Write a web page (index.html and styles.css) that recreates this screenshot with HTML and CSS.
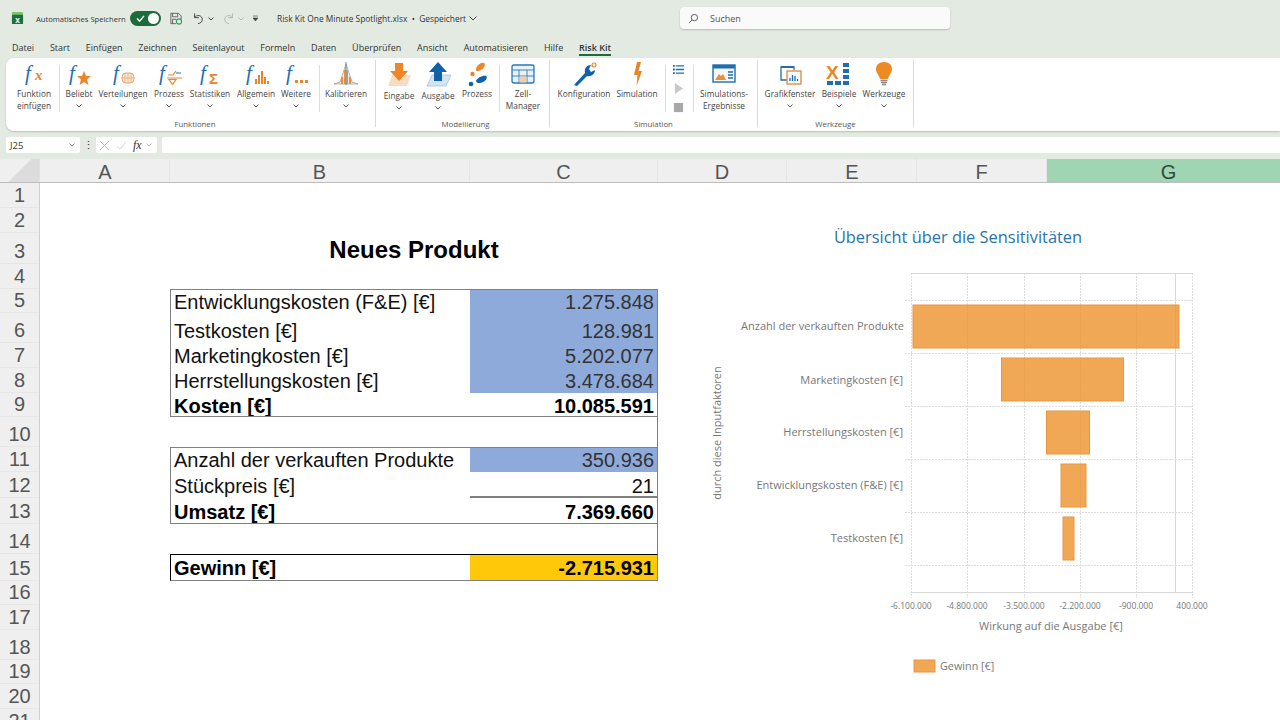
FILE: index.html
```html
<!DOCTYPE html>
<html lang="de">
<head>
  <meta charset="UTF-8" />
  <meta name="viewport" content="width=device-width, initial-scale=1.0" />
  <title>Risk Kit One Minute Spotlight</title>
  <link rel="stylesheet" href="styles.css">
</head>
<body>

<!-- Title bar -->
<header class="titlebar">
  <svg class="app-icon" viewBox="0 0 14 14">
    <rect x="1" y="0" width="12" height="7" rx="1" fill="#7cc36a"/>
    <rect x="1" y="3" width="12" height="10" rx="1" fill="#1d6f42"/>
    <text x="7" y="11.5" class="app-x">x</text>
  </svg>
  <span class="autosave">Automatisches Speichern</span>
  <div class="toggle">
    <svg viewBox="0 0 10 8" class="toggle-check"><path d="M1 4l3 3 5-6" fill="none" stroke="#fff" stroke-width="1.6"/></svg>
    <span class="toggle-knob"></span>
  </div>
  <svg class="qa save" viewBox="0 0 14 14">
    <path d="M1 1h9l3 3v4M1 1v12h6M3 1v4h6V1M3 13V8h4" fill="none" stroke="#555" stroke-width="1"/>
    <circle cx="10.5" cy="10.5" r="3" fill="none" stroke="#2f9e5b" stroke-width="1.3"/>
  </svg>
  <svg class="qa undo" viewBox="0 0 14 14"><path d="M3 1v5h5M3 6c2-4 9-3 9 2 0 3-2 4.500-5 5" fill="none" stroke="#444" stroke-width="1.1"/></svg>
  <svg class="chev chev-undo" viewBox="0 0 6 4"><path d="M.5 .5L3 3 5.500 .5" fill="none" stroke="#444"/></svg>
  <svg class="qa redo" viewBox="0 0 14 14"><path d="M11 1v5H6M11 6C9 2 2 3 2 8c0 3 2 4.500 5 5" fill="none" stroke="#b5b9b5" stroke-width="1.1"/></svg>
  <svg class="chev chev-redo" viewBox="0 0 6 4"><path d="M.5 .5L3 3 5.500 .5" fill="none" stroke="#b5b9b5"/></svg>
  <svg class="chev chev-custom" viewBox="0 0 7 7"><path d="M1 1h5M1 3h5L3.500 6z" fill="#444" stroke="#444" stroke-width=".6"/></svg>
  <span class="filename">Risk Kit One Minute Spotlight.xlsx &nbsp;•&nbsp; Gespeichert</span>
  <svg class="chev chev-file" viewBox="0 0 8 5"><path d="M.5 .5L4 4 7.500 .5" fill="none" stroke="#444"/></svg>
  <div class="search">
    <svg viewBox="0 0 12 12" class="search-icon"><circle cx="7" cy="5" r="3.500" fill="none" stroke="#555"/><path d="M4.500 7.500L1 11" stroke="#555"/></svg>
    <span>Suchen</span>
  </div>
</header>

<!-- Tabs -->
<nav class="tabs">
  <span>Datei</span>
  <span>Start</span>
  <span>Einfügen</span>
  <span>Zeichnen</span>
  <span>Seitenlayout</span>
  <span>Formeln</span>
  <span>Daten</span>
  <span>Überprüfen</span>
  <span>Ansicht</span>
  <span>Automatisieren</span>
  <span>Hilfe</span>
  <span class="tab-active">Risk Kit</span>
</nav>

<!-- Ribbon -->
<section class="ribbon">
  <div class="group group-funktionen">
    <div class="tools">
      <div class="tool">
        <svg class="ico" viewBox="0 0 28 26"><text x="5" y="19" class="fn">f</text><text x="15" y="19" class="fn-x">x</text></svg>
        <p>Funktion<br>einfügen</p>
      </div>
      <i class="sep"></i>
      <div class="tool">
        <svg class="ico" viewBox="0 0 28 26"><text x="4" y="19" class="fn">f</text><polygon points="19,10 21,15 26,15 22,18.500 23.500,24 19,21 14.500,24 16,18.500 12,15 17,15" fill="#e8842a"/></svg>
        <p>Beliebt</p>
        <svg class="chev-down" viewBox="0 0 6 4"><path d="M.5 .5L3 3 5.500 .5" fill="none" stroke="#555"/></svg>
      </div>
      <div class="tool">
        <svg class="ico" viewBox="0 0 28 26"><text x="4" y="19" class="fn">f</text><rect x="13" y="12" width="12" height="10" rx="4" fill="#fbeadb" stroke="#e3a56c"/><path d="M19 12v10M13 17h12M16 12v10M22 12v10" stroke="#e3a56c" stroke-width=".7"/></svg>
        <p>Verteilungen</p>
        <svg class="chev-down" viewBox="0 0 6 4"><path d="M.5 .5L3 3 5.500 .5" fill="none" stroke="#555"/></svg>
      </div>
      <div class="tool">
        <svg class="ico" viewBox="0 0 28 26"><text x="4" y="19" class="fn">f</text><path d="M13 14h5l3-4M12 17h15" fill="none" stroke="#e8842a" stroke-width="1.200"/><path d="M14 18.500h7l-3.500 5z" fill="none" stroke="#e8842a" stroke-width="1.200"/><path d="M21 12h5" stroke="#1f6fb0"/></svg>
        <p>Prozess</p>
        <svg class="chev-down" viewBox="0 0 6 4"><path d="M.5 .5L3 3 5.500 .5" fill="none" stroke="#555"/></svg>
      </div>
      <div class="tool">
        <svg class="ico" viewBox="0 0 28 26"><text x="4" y="19" class="fn">f</text><text x="13" y="23" class="fn-sum">Σ</text></svg>
        <p>Statistiken</p>
        <svg class="chev-down" viewBox="0 0 6 4"><path d="M.5 .5L3 3 5.500 .5" fill="none" stroke="#555"/></svg>
      </div>
      <div class="tool">
        <svg class="ico" viewBox="0 0 28 26"><text x="4" y="19" class="fn">f</text><path d="M13 18h2v5h-2zM16 14h2v9h-2zM19 10h2v13h-2zM22 16h2v7h-2zM25 20h2v3h-2z" fill="#e8842a"/></svg>
        <p>Allgemein</p>
        <svg class="chev-down" viewBox="0 0 6 4"><path d="M.5 .5L3 3 5.500 .5" fill="none" stroke="#555"/></svg>
      </div>
      <div class="tool">
        <svg class="ico" viewBox="0 0 28 26"><text x="4" y="19" class="fn">f</text><path d="M13 19h3v3h-3zM18 19h3v3h-3zM23 19h3v3h-3z" fill="#e8842a"/></svg>
        <p>Weitere</p>
        <svg class="chev-down" viewBox="0 0 6 4"><path d="M.5 .5L3 3 5.500 .5" fill="none" stroke="#555"/></svg>
      </div>
      <i class="sep"></i>
      <div class="tool">
        <svg class="ico" viewBox="0 0 28 26"><path d="M2 23h24L20 21 16 9 14 3 12 9 8 21z" fill="#f6e8da" stroke="#9a9a9a" stroke-width=".7"/><path d="M9 16h2v7H9zM12 9h1.500v14H12zM14.500 9H16v14h-1.500zM17 16h2v7h-2z" fill="#e8913a"/><path d="M14 1v23" stroke="#1f6fb0" stroke-width=".8"/></svg>
        <p>Kalibrieren</p>
        <svg class="chev-down" viewBox="0 0 6 4"><path d="M.5 .5L3 3 5.500 .5" fill="none" stroke="#555"/></svg>
      </div>
    </div>
    <div class="group-label">Funktionen</div>
  </div>

  <div class="group group-modell">
    <div class="tools">
      <div class="tool tool-low">
        <svg class="ico" viewBox="0 0 28 26"><polygon points="7,14 26,14 22,25 3,25" fill="#f7dcc4"/><polygon points="10,2 18,2 18,10 23,10 14,20 5,10 10,10" fill="#ed8623"/></svg>
        <p>Eingabe</p>
        <svg class="chev-down" viewBox="0 0 6 4"><path d="M.5 .5L3 3 5.500 .5" fill="none" stroke="#555"/></svg>
      </div>
      <div class="tool tool-low">
        <svg class="ico" viewBox="0 0 28 26"><polygon points="8,14 27,14 22,25 3,25" fill="#d4e4f2" stroke="#9dbcd8" stroke-width=".7"/><polygon points="14,1 23,11 18,11 18,20 10,20 10,11 5,11" fill="#0f62a8"/></svg>
        <p>Ausgabe</p>
        <svg class="chev-down" viewBox="0 0 6 4"><path d="M.5 .5L3 3 5.500 .5" fill="none" stroke="#555"/></svg>
      </div>
      <div class="tool">
        <svg class="ico" viewBox="0 0 28 26"><path d="M13 9c0-4 5-8 8-7 2 1 0 6-3 7-2 1-5 2-5 0z" fill="#ed8623"/><circle cx="9.500" cy="13" r="2.200" fill="#ed8623"/><path d="M13 20c1-3 7-6 10-5 2 1 0 5-3 6-3 2-7 1-7-1z" fill="#0f62a8"/><circle cx="8" cy="23" r="2.300" fill="#0f62a8"/></svg>
        <p>Prozess</p>
      </div>
      <i class="sep"></i>
      <div class="tool">
        <svg class="ico" viewBox="0 0 28 26"><rect x="3" y="4" width="22" height="18" rx="2" fill="#e9f1f8" stroke="#2a78b8" stroke-width="1.300"/><path d="M3 9h22M3 15h22M10 9v13M18 9v13" stroke="#2a78b8" stroke-width=".9"/><rect x="10.500" y="15.500" width="7" height="6" fill="#f3cfa8"/></svg>
        <p>Zell-<br>Manager</p>
      </div>
    </div>
    <div class="group-label">Modellierung</div>
  </div>

  <div class="group group-sim">
    <div class="tools">
      <div class="tool">
        <svg class="ico" viewBox="0 0 28 26"><path d="M4 24l11-12c-1-5 2-8 6-8l-2 4 2 3 4-2c0 4-4 7-8 6L7 25z" fill="#0f62a8"/><circle cx="24" cy="4" r="2" fill="none" stroke="#e8842a" stroke-width="1.200"/></svg>
        <p>Konfiguration</p>
      </div>
      <div class="tool">
        <svg class="ico" viewBox="0 0 28 26"><polygon points="14,1 18,1 15.500,10 19,10 13.500,25 14.500,14 11,14" fill="#e8842a"/></svg>
        <p>Simulation</p>
      </div>
      <i class="sep"></i>
      <div class="mini-tools">
        <svg viewBox="0 0 12 12" class="mini"><path d="M0 1h2v2H0zM0 5h2v2H0zM0 9h2v2H0z" fill="#1f6fb0"/><path d="M3 2h9M3 6h9M3 10h9" stroke="#1f6fb0" stroke-width="1.400"/></svg>
        <svg viewBox="0 0 12 12" class="mini"><polygon points="2,0 11,6 2,12" fill="#c9c9c9"/></svg>
        <svg viewBox="0 0 12 12" class="mini"><rect x="1" y="1" width="10" height="10" fill="#a8a8a8"/></svg>
      </div>
      <i class="sep"></i>
      <div class="tool">
        <svg class="ico" viewBox="0 0 28 26"><rect x="3" y="4" width="22" height="17" fill="#f4f8fb" stroke="#1f6fb0" stroke-width="1.400"/><rect x="3" y="4" width="22" height="3.500" fill="#1f6fb0"/><path d="M5 19l4-6 2 2 2-2 3 6z" fill="#e8913a"/><path d="M18 11h5M18 14h5M18 17h5" stroke="#1f6fb0" stroke-width="1.300"/></svg>
        <p>Simulations-<br>Ergebnisse</p>
      </div>
    </div>
    <div class="group-label">Simulation</div>
  </div>

  <div class="group group-werk">
    <div class="tools">
      <div class="tool">
        <svg class="ico" viewBox="0 0 28 26"><path d="M12 19H5V6h13v3" fill="none" stroke="#1f6fb0" stroke-width="1.300"/><path d="M5 6h13" stroke="#1f6fb0" stroke-width="2"/><rect x="11" y="10" width="14" height="13" fill="#f7fafc" stroke="#d98a3e" stroke-width="1.300"/><path d="M14 20v-3M16.500 20v-6M19 20v-5M21.500 20v-2" stroke="#1f6fb0" stroke-width="1.300"/></svg>
        <p>Grafikfenster</p>
        <svg class="chev-down" viewBox="0 0 6 4"><path d="M.5 .5L3 3 5.500 .5" fill="none" stroke="#555"/></svg>
      </div>
      <div class="tool">
        <svg class="ico" viewBox="0 0 28 26"><text x="1" y="18" class="x-mark">X</text><path d="M18 2h6v4h-6zM18 8h6v4h-6zM18 14h6v4h-6zM2 20h6v4H2zM10 20h6v4h-6zM18 20h6v4h-6z" fill="#1f6fb0"/></svg>
        <p>Beispiele</p>
        <svg class="chev-down" viewBox="0 0 6 4"><path d="M.5 .5L3 3 5.500 .5" fill="none" stroke="#555"/></svg>
      </div>
      <div class="tool">
        <svg class="ico" viewBox="0 0 28 26"><path d="M14 1c5 0 8 3 8 7 0 4-3 6-4 10h-8C9 14 6 12 6 8c0-4 3-7 8-7z" fill="#ee8a23"/><path d="M10.500 19.500h7M11 21.500h6M12 23.500h4" stroke="#8d8d8d" stroke-width="1.300"/></svg>
        <p>Werkzeuge</p>
        <svg class="chev-down" viewBox="0 0 6 4"><path d="M.5 .5L3 3 5.500 .5" fill="none" stroke="#555"/></svg>
      </div>
    </div>
    <div class="group-label">Werkzeuge</div>
  </div>
</section>

<!-- Formula bar -->
<div class="formula-bar">
  <div class="name-box">
    <span>J25</span>
    <svg class="chev" viewBox="0 0 8 5"><path d="M.5 .5L4 4 7.500 .5" fill="none" stroke="#555"/></svg>
  </div>
  <div class="fx-dots">⋮</div>
  <div class="fx-box">
    <svg viewBox="0 0 10 10" class="fx-ico"><path d="M0 0l10 10M10 0L0 10" stroke="#b5b5b5"/></svg>
    <svg viewBox="0 0 12 10" class="fx-ico"><path d="M0 6l4 4 8-10" fill="none" stroke="#c5c5c5"/></svg>
    <span class="fx-label">fx</span>
    <svg class="chev" viewBox="0 0 8 5"><path d="M.5 .5L4 4 7.500 .5" fill="none" stroke="#999"/></svg>
  </div>
  <div class="formula-input"></div>
</div>

<!-- Column headers -->
<div class="col-headers">
  <div class="corner"></div>
  <div class="col col-a">A</div>
  <div class="col col-b">B</div>
  <div class="col col-c">C</div>
  <div class="col col-d">D</div>
  <div class="col col-e">E</div>
  <div class="col col-f">F</div>
  <div class="col col-g">G</div>
</div>

<main class="sheet">
  <div class="row-headers">
    <div class="h25">1</div>
    <div class="h25">2</div>
    <div class="h31">3</div>
    <div class="h25">4</div>
    <div class="h24">5</div>
    <div class="h30">6</div>
    <div class="h25">7</div>
    <div class="h25">8</div>
    <div class="h24">9</div>
    <div class="h30">10</div>
    <div class="h25">11</div>
    <div class="h26">12</div>
    <div class="h26">13</div>
    <div class="h30">14</div>
    <div class="h27">15</div>
    <div class="h24">16</div>
    <div class="h25">17</div>
    <div class="h30">18</div>
    <div class="h24">19</div>
    <div class="h25">20</div>
    <div class="h25">21</div>
  </div>

  <div class="cells">
    <div class="calc">
      <div class="h25"></div>
      <div class="h25"></div>
      <h1 class="h31 calc-title">Neues Produkt</h1>
      <div class="h25"></div>

      <div class="box">
        <div class="row h24"><span>Entwicklungskosten (F&amp;E) [€]</span><span class="val input">1.275.848</span></div>
        <div class="row h30"><span>Testkosten [€]</span><span class="val input">128.981</span></div>
        <div class="row h25"><span>Marketingkosten [€]</span><span class="val input">5.202.077</span></div>
        <div class="row h25"><span>Herrstellungskosten [€]</span><span class="val input">3.478.684</span></div>
        <div class="row h24 bold"><span>Kosten [€]</span><span class="val">10.085.591</span></div>
      </div>
      <div class="spacer h30"></div>

      <div class="box">
        <div class="row h25"><span>Anzahl der verkauften Produkte</span><span class="val input">350.936</span></div>
        <div class="row h26"><span>Stückpreis [€]</span><span class="val underlined">21</span></div>
        <div class="row h26 bold"><span>Umsatz [€]</span><span class="val">7.369.660</span></div>
      </div>
      <div class="spacer h30"></div>

      <div class="box box-result">
        <div class="row h27 bold"><span>Gewinn [€]</span><span class="val result">-2.715.931</span></div>
      </div>
    </div>

    <!-- Sensitivity chart, drawn in page coordinates -->
    <svg class="chart" viewBox="700 220 560 480">
      <text x="958" y="243" class="chart-title">Übersicht über die Sensitivitäten</text>

      <g class="grid-v">
        <path d="M911.500 273v325M967.500 273v325M1024.500 273v325M1080.500 273v325M1136.500 273v325M1192.500 273v325"/>
      </g>
      <path d="M1175.500 273v319" class="grid-strong"/>
      <g class="grid-h">
        <path d="M905 300.500h288M905 353.500h288M905 406.500h288M905 459.500h288M905 512.500h288M905 565.500h288"/>
      </g>
      <path d="M911 273.500h282M911 592.500h282" class="grid-strong"/>

      <rect x="913" y="305" width="266" height="43" class="bar"/>
      <rect x="1001.500" y="358" width="122" height="43" class="bar"/>
      <rect x="1046.500" y="411" width="43" height="43" class="bar"/>
      <rect x="1061" y="464" width="25" height="43" class="bar"/>
      <rect x="1063" y="517" width="11" height="43" class="bar"/>

      <g class="cat-labels">
        <text x="904" y="330">Anzahl der verkauften Produkte</text>
        <text x="903" y="384">Marketingkosten [€]</text>
        <text x="903" y="436">Herrstellungskosten [€]</text>
        <text x="903" y="489">Entwicklungskosten (F&amp;E) [€]</text>
        <text x="903" y="542">Testkosten [€]</text>
      </g>

      <g class="val-labels">
        <text x="911" y="609">-6.100.000</text>
        <text x="967" y="609">-4.800.000</text>
        <text x="1024" y="609">-3.500.000</text>
        <text x="1080" y="609">-2.200.000</text>
        <text x="1136" y="609">-900.000</text>
        <text x="1192" y="609">400.000</text>
      </g>

      <text x="1051" y="630" class="axis-title">Wirkung auf die Ausgabe [€]</text>
      <text transform="translate(721 433) rotate(-90)" class="axis-title">durch diese Inputfaktoren</text>

      <rect x="914" y="660" width="21" height="12" class="bar"/>
      <text x="940" y="670" class="legend">Gewinn [€]</text>
    </svg>
  </div>
</main>

</body>
</html>
```

FILE: styles.css
```css
* {
  box-sizing: border-box;
}

body {
  font-family: 'Open Sans', sans-serif;
  background-color: #e3eae1;
  color: #333;
  margin: 0;
  height: 720px;
  overflow: hidden;
}

/* Title bar */
.titlebar {
  display: flex;
  align-items: center;
  height: 37px;
  padding-left: 11px;
  font-size: 9px;
}

.app-icon {
  width: 13px;
  height: 13px;
}

.app-x {
  font: bold 9px 'Liberation Sans', sans-serif;
  fill: #fff;
  text-anchor: middle;
}

.autosave {
  margin-left: 12px;
  width: 94px;
  white-space: nowrap;
  font-size: 7.600px;
}

.toggle {
  position: relative;
  width: 31px;
  height: 15px;
  border-radius: 8px;
  background-color: #1c6b3b;
}

.toggle-check {
  position: absolute;
  left: 6px;
  top: 4px;
  width: 9px;
  height: 7px;
}

.toggle-knob {
  position: absolute;
  right: 2px;
  top: 2px;
  width: 11px;
  height: 11px;
  border-radius: 50%;
  background: #fff;
}

.qa {
  width: 12px;
  height: 13px;
}

.save { margin-left: 9px; }
.undo { margin-left: 10px; }
.redo { margin-left: 9px; }

.chev {
  width: 6px;
  height: 4px;
  flex: none;
}

.chev-undo { margin-left: 4px; }
.chev-redo { margin-left: 3px; }
.chev-custom { margin-left: 8px; width: 7px; height: 7px; }
.chev-file { margin-left: 3px; width: 8px; height: 5px; }

.filename {
  margin-left: 18px;
  white-space: nowrap;
  font-size: 8.400px;
}

.search {
  display: flex;
  align-items: center;
  position: absolute;
  left: 680px;
  top: 7px;
  width: 270px;
  height: 22px;
  padding-left: 8px;
  background: #f9faf9;
  border-radius: 4px;
  box-shadow: 0 1px 2px rgba(0, 0, 0, 0.2);
  font-size: 9px;
  color: #555;
}

.search-icon {
  width: 11px;
  height: 11px;
  margin-right: 11px;
}

/* Tabs */
.tabs {
  display: flex;
  gap: 15.800px;
  height: 21px;
  padding-left: 12px;
  font-size: 9px;
  line-height: 21px;
}

.tab-active {
  position: relative;
  font-weight: 600;
}

.tab-active::after {
  content: "";
  position: absolute;
  left: 0;
  right: 0;
  bottom: 2px;
  height: 2px;
  background: #1c6b3b;
}

/* Ribbon */
.ribbon {
  display: flex;
  height: 73px;
  margin-left: 6px;
  background: #fff;
  border-radius: 8px 0 0 8px;
  box-shadow: 0 1px 2px rgba(0, 0, 0, 0.18);
}

.group {
  display: flex;
  flex-direction: column;
  margin: 2px 0 4px;
  border-right: 1px solid #d9d9d9;
}

.group-funktionen { width: 370px; padding-left: 9px; }
.group-modell { width: 174px; padding-left: 6px; }
.group-sim { width: 208px; }
.group-werk { width: 156px; }

.tools {
  display: grid;
  height: 56px;
}

.group-funktionen .tools { grid-template-columns: 38px 7px 38px 50px 42px 40px 52px 28px 10px 52px; }
.group-modell .tools { grid-template-columns: 34px 44px 34px 6px 46px; }
.group-sim .tools { grid-template-columns: 68px 38px 10px 24px 4px 60px; }
.group-werk .tools { grid-template-columns: 64px 34px 56px; }

.tool {
  display: flex;
  flex-direction: column;
  align-items: center;
  min-width: 0;
  font-size: 8.300px;
  line-height: 12px;
  color: #444;
}

.tool p {
  margin: 1px 0 0;
  text-align: center;
  white-space: nowrap;
}

.tool-low p {
  margin-top: 3px;
}

.ico {
  flex: none;
  width: 28px;
  height: 26px;
  margin-top: 1px;
}

.chev-down {
  width: 6px;
  height: 4px;
  margin-top: 4px;
}

.fn {
  font: italic 21px 'Liberation Serif', serif;
  fill: #1f6fb0;
}

.fn-x {
  font: italic bold 15px 'Liberation Serif', serif;
  fill: #e8842a;
}

.fn-sum {
  font: bold 15px 'Liberation Sans', sans-serif;
  fill: #e8842a;
}

.x-mark {
  font: bold 19px 'Liberation Sans', sans-serif;
  fill: #ed8623;
}

.sep {
  justify-self: end;
  width: 1px;
  height: 47px;
  margin-top: 5px;
  background: #dcdcdc;
}

.mini-tools {
  display: flex;
  flex-direction: column;
  align-items: center;
  gap: 8px;
  padding-top: 4px;
}

.mini {
  width: 11px;
  height: 11px;
}

.group-label {
  margin-top: auto;
  margin-bottom: -3px;
  text-align: center;
  font-size: 7.800px;
  line-height: 11px;
  color: #555;
}

/* Formula bar */
.formula-bar {
  display: flex;
  height: 16px;
  margin: 6px 0;
  padding-left: 6px;
  font-size: 9.500px;
}

.name-box {
  display: flex;
  align-items: center;
  justify-content: space-between;
  width: 74px;
  padding: 0 5px 0 4px;
  background: #fff;
  border-radius: 2px;
}

.fx-dots {
  width: 16px;
  text-align: center;
  line-height: 16px;
  font-size: 11px;
}

.fx-box {
  display: flex;
  align-items: center;
  gap: 8px;
  width: 61px;
  padding-left: 4px;
  background: #fff;
  border-radius: 2px;
}

.fx-ico {
  width: 9px;
  height: 9px;
}

.fx-label {
  margin-left: -1px;
  margin-right: -4px;
  font: italic 12px 'Liberation Serif', serif;
}

.formula-input {
  flex: 1;
  margin-left: 5px;
  background: #fff;
  border-radius: 2px 0 0 2px;
}

/* Sheet headers */
.col-headers {
  display: flex;
  height: 24px;
  background: #efefef;
  border-bottom: 1px solid #bdbdbd;
  font: 20px/26px 'Liberation Sans', sans-serif;
  color: #555;
}

.corner {
  width: 40px;
  border-right: 1px solid #e0e0e0;
  background: linear-gradient(135deg, #efefef 50%, #dcdcdc 50%);
}

.col {
  height: 23px;
  text-align: center;
  border-right: 1px solid #e6e6e6;
}

.col-a { width: 130px; padding-left: 1px; }
.col-b { width: 300px; }
.col-c { width: 188px; }
.col-d { width: 129px; }
.col-e { width: 130px; padding-left: 1px; }
.col-f { width: 130px; }

.col-g {
  flex: 1;
  padding-left: 10px;
  background: #9fd5b3;
  color: #2f4a3a;
  border-right: none;
}

.sheet {
  display: flex;
  height: 537px;
  overflow: hidden;
  background: #fff;
}

.row-headers {
  width: 40px;
  flex: none;
  background: #efefef;
  border-right: 1px solid #cfcfcf;
  font: 20px/24px 'Liberation Sans', sans-serif;
  color: #555;
}

.row-headers div {
  display: flex;
  align-items: flex-end;
  justify-content: center;
  border-bottom: 1px solid #e6e6e6;
}

.h24 { height: 24px; }
.h25 { height: 25px; }
.h26 { height: 26px; }
.h27 { height: 27px; }
.h30 { height: 30px; }
.h31 { height: 31px; }

/* Calculation table */
.cells {
  position: relative;
  flex: 1;
}

.calc {
  width: 488px;
  margin-left: 130px;
  font: 20px 'Liberation Sans', sans-serif;
  color: #111;
}

.calc-title {
  margin: 0;
  text-align: center;
  font-size: 24px;
  line-height: 34px;
  color: #000;
}

.box {
  outline: 1px solid #808080;
  outline-offset: -1px;
}

.box-result {
  outline: none;
  border-top: 1px solid #000;
  border-left: 1px solid #000;
  border-right: 1px solid #808080;
  border-bottom: 1px solid #808080;
}

.row {
  display: grid;
  grid-template-columns: 300px 188px;
  line-height: 24px;
}

.row.h24 {
  line-height: 22px;
}

.box-result .row {
  grid-template-columns: 299px 187px;
  height: 25px;
}

.row span {
  display: flex;
  align-items: flex-end;
  padding-left: 4px;
  white-space: nowrap;
}

.box-result .row span {
  padding-left: 3px;
}

.row .val {
  justify-content: flex-end;
  padding: 0 4px 0 0;
}

.box-result .row .val {
  padding: 0 3px 0 0;
}

.bold {
  font-weight: bold;
  color: #000;
}

.input {
  background: #8eaadb;
  color: #333;
}

.result {
  background: #ffc90a;
}

.underlined {
  box-shadow: inset 0 -2px 0 #808080;
}

.spacer {
  margin-left: 300px;
  border-right: 1px solid #808080;
}

/* Chart */
.chart {
  position: absolute;
  left: 660px;
  top: 37px;
  width: 560px;
  height: 480px;
  font-family: 'Open Sans', sans-serif;
}

.chart-title {
  font-size: 16.400px;
  fill: #2a73a8;
  text-anchor: middle;
}

.grid-v path,
.grid-h path {
  fill: none;
  stroke: #dcdcdc;
  stroke-dasharray: 2 1;
}

.grid-strong {
  fill: none;
  stroke: #d8d8d8;
}

.bar {
  fill: rgba(236, 143, 40, 0.78);
  stroke: #ea963e;
}

.cat-labels text {
  font-size: 11px;
  fill: #777;
  text-anchor: end;
}

.val-labels text {
  font-size: 8.500px;
  fill: #777;
  text-anchor: middle;
}

.axis-title {
  font-size: 11px;
  fill: #777;
  text-anchor: middle;
}

.legend {
  font-size: 10.800px;
  fill: #777;
}
```
